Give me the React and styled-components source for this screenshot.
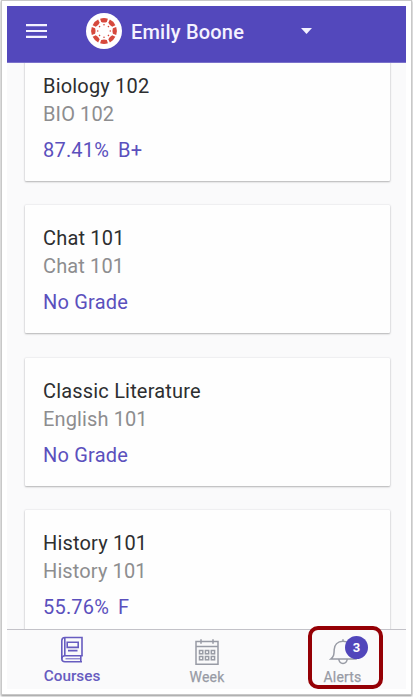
import React from 'react';
import styled, { createGlobalStyle } from 'styled-components';

const GlobalStyle = createGlobalStyle`
  * {
    box-sizing: border-box;
  }

  body {
    margin: 0;
    background: #fff;
    font-family: Roboto, 'Liberation Sans', sans-serif;
  }
`;

const Frame = styled.div`
  width: 413px;
  height: 697px;
  padding: 1px 2px 3px 2px;
  background: #fff;
`;

const Sheet = styled.div`
  height: 693px;
  padding: 5px;
  background: #fff;
  box-shadow: 0 0 0 1px #c8c8c8, 0 1px 2px 1px rgba(0, 0, 0, 0.45);
`;

const Screen = styled.div`
  display: flex;
  flex-direction: column;
  height: 683px;
  background: #fafafb;
`;

const Header = styled.header`
  display: flex;
  align-items: center;
  flex: none;
  height: 57px;
  padding: 0 0 6px 19px;
  background: #5348bc;
  border-bottom: 1px solid #7a71cb;
  color: #f4f2ff;
`;

const Avatar = styled.div`
  display: flex;
  width: 36px;
  height: 36px;
  margin: 0 9px 0 39px;
  border-radius: 50%;
  background: #fff;
`;

const UserName = styled.div`
  width: 170px;
  padding-top: 2px;
  font-size: 20px;
  font-weight: 500;
  line-height: 24px;
  letter-spacing: 0.2px;
  white-space: nowrap;
`;

const CourseList = styled.main`
  flex: 1;
  min-height: 0;
  padding: 0 16px 0 18px;
  overflow: hidden;
`;

const Scrolled = styled.div`
  display: flex;
  flex-direction: column;
  gap: 24.4px;
  margin-top: -10px;
`;

const Card = styled.article`
  height: 128px;
  padding: 20px 18px 0;
  border-radius: 1px;
  background: #fefefe;
  box-shadow: 0 0 2px rgba(30, 30, 60, 0.14), 0 1px 2px rgba(0, 0, 0, 0.26);
`;

const CourseName = styled.div`
  color: #2d2e30;
  font-size: 20px;
  line-height: 27px;
  letter-spacing: 0.18px;
`;

const CourseCode = styled.div`
  padding-top: 1px;
  color: #8d8d8f;
  font-size: 20px;
  line-height: 27px;
  letter-spacing: 0.12px;
`;

const Grade = styled.div`
  display: flex;
  gap: 9px;
  margin-top: 9px;
  color: #5b50bd;
  font-size: 20px;
  line-height: 27px;
  letter-spacing: 0.2px;
`;

const TabBar = styled.nav`
  display: grid;
  grid-template-columns: 130px 140px 131px;
  flex: none;
  height: 60px;
  border-top: 1px solid #c3c2c8;
`;

const Tab = styled.div`
  position: relative;
  display: flex;
  flex-direction: column;
  align-items: center;
  padding-top: ${({ $active }) => ($active ? '6px' : '8px')};
  color: ${({ $active }) => ($active ? '#675cc0' : '#989ba5')};
`;

const TabLabel = styled.div`
  margin-top: ${({ $active }) => ($active ? '3px' : '1px')};
  font-size: ${({ $active }) => ($active ? '15.3px' : '14px')};
  font-weight: ${({ $active }) => ($active ? 500 : 400)};
  line-height: 20px;
  letter-spacing: ${({ $active }) => ($active ? '0' : '0.2px')};
  -webkit-text-stroke: ${({ $active }) => ($active ? '0' : '0.25px currentColor')};
`;

const Badge = styled.span`
  position: absolute;
  top: 6px;
  left: 68px;
  width: 23px;
  height: 23px;
  border-radius: 50%;
  background: #5146bb;
  color: #fff;
  font-size: 13px;
  font-weight: 700;
  line-height: 24px;
  text-align: center;
`;

const Highlight = styled.div`
  position: absolute;
  top: -4px;
  left: 31px;
  width: 75px;
  height: 63px;
  border: 4px solid #950005;
  border-radius: 10px;
`;

const courses = [
  { name: 'Biology 102', code: 'BIO 102', grade: ['87.41%', 'B+'] },
  { name: 'Chat 101', code: 'Chat 101', grade: ['No Grade'] },
  { name: 'Classic Literature', code: 'English 101', grade: ['No Grade'] },
  { name: 'History 101', code: 'History 101', grade: ['55.76%', 'F'] },
];

const angles = [0, 45, 90, 135, 180, 225, 270, 315];

const MenuIcon = () => (
  <svg width="21" height="16" viewBox="0 0 21 16" fill="currentColor">
    <path d="M0 1h21v2.2H0zM0 6.9h21v2.2H0zM0 12.8h21v2.2H0z" />
  </svg>
);

const CanvasLogo = () => (
  <svg width="36" height="36" viewBox="-18 -18 36 36" fill="#d6493d">
    {angles.map((angle) => (
      <g key={angle} transform={`rotate(${angle})`}>
        <path d="M-3.9-12.2Q0-13.6 3.9-12.2L2.8-8.9Q0-7.9-2.8-8.9Z" />
        <circle cx="0" cy="-6.3" r="0.8" />
      </g>
    ))}
  </svg>
);

const CaretIcon = () => (
  <svg width="11" height="6" viewBox="0 0 11 6" fill="currentColor">
    <path d="M0 0h11L5.5 6z" />
  </svg>
);

const BookIcon = () => (
  <svg width="24" height="27" viewBox="0 0 24 27" fill="none" stroke="currentColor" strokeWidth="1.6">
    <path d="M22 19.5V1.5H5Q1.8 1.5 1.8 4.7v18Q1.8 25.7 5 25.7h17" />
    <path d="M22.8 19.7H5q-3.2 0-3.2 3M4.8 1.7v17.8M20.8 20v5.5" />
    <path d="M7.2 6.2h11v5.2h-11zM8 14.6h9.5" />
    <path d="M5.5 22.8H20" strokeWidth="1" />
  </svg>
);

const CalendarIcon = () => (
  <svg width="24" height="28" viewBox="0 0 24 28" fill="none" stroke="currentColor" strokeWidth="1.5">
    <path d="M1 3.6h22v22.6H1zM1 8.5h22M6 1.2v4.6M18 1.2v4.6" />
    {[4.5, 10.4, 16.3].map((x) => (
      <React.Fragment key={x}>
        <rect x={x} y="12.5" width="3.3" height="3.3" />
        <rect x={x} y="18.5" width="3.3" height="3.3" />
      </React.Fragment>
    ))}
  </svg>
);

const BellIcon = () => (
  <svg width="28" height="28" viewBox="0 0 28 28" fill="none" stroke="currentColor" strokeWidth="1.5">
    <path d="M14 1.2v2M14 3.2C8.4 3.2 5.4 7 5.2 11.5c-.2 4.5 0 6.5-3.4 9.5h24.4c-3.4-3-3.2-5-3.4-9.5C22.6 7 19.6 3.2 14 3.2z" />
    <path d="M9.8 21c.3 3 2 4.4 4.2 4.4s3.9-1.4 4.2-4.4" />
  </svg>
);

const App = () => {
  return (
    <Frame>
      <GlobalStyle />
      <Sheet>
        <Screen>
          <Header>
            <MenuIcon />
            <Avatar>
              <CanvasLogo />
            </Avatar>
            <UserName>Emily Boone</UserName>
            <CaretIcon />
          </Header>

          <CourseList>
            <Scrolled>
              {courses.map((course) => (
                <Card key={course.name}>
                  <CourseName>{course.name}</CourseName>
                  <CourseCode>{course.code}</CourseCode>
                  <Grade>
                    {course.grade.map((part) => (
                      <span key={part}>{part}</span>
                    ))}
                  </Grade>
                </Card>
              ))}
            </Scrolled>
          </CourseList>

          <TabBar>
            <Tab $active>
              <BookIcon />
              <TabLabel $active>Courses</TabLabel>
            </Tab>
            <Tab>
              <CalendarIcon />
              <TabLabel>Week</TabLabel>
            </Tab>
            <Tab>
              <BellIcon />
              <Badge>3</Badge>
              <TabLabel>Alerts</TabLabel>
              <Highlight />
            </Tab>
          </TabBar>
        </Screen>
      </Sheet>
    </Frame>
  );
};

export default App;
